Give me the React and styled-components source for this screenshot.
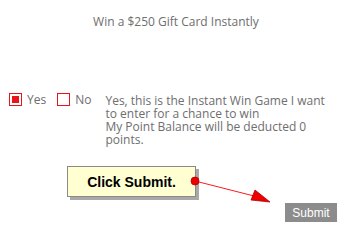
import React from 'react';
import styled, { createGlobalStyle } from 'styled-components';

const GlobalStyle = createGlobalStyle`
    html, body {
        margin: 0;
        padding: 0;
        background: #fff;
    }
    body {
        font-family: "Open Sans", "Liberation Sans", sans-serif;
    }
`;

const Page = styled.div`
    position: relative;
    width: 352px;
    height: 244px;
    overflow: hidden;
`;

const Title = styled.h1`
    margin: 0;
    padding-top: 14px;
    text-align: center;
    font-size: 12px;
    font-weight: 400;
    line-height: 16px;
    color: #6e6e6e;
`;

const OptionRow = styled.div`
    display: flex;
    align-items: flex-start;
    margin-top: 63px;
    padding-left: 9px;
`;

const Choice = styled.label`
    display: flex;
    align-items: center;
    gap: 5px;
    margin-right: ${(p) => p.$gap}px;
    font-size: 12px;
    line-height: 13px;
    color: #6e6e6e;
`;

const Box = styled.span`
    box-sizing: border-box;
    width: 13px;
    height: 13px;
    border: 1px solid #e8141a;
    background: #fff;
    display: flex;
    align-items: center;
    justify-content: center;

    &::after {
        content: '';
        display: ${(p) => (p.$checked ? 'block' : 'none')};
        width: 7px;
        height: 7px;
        background: #e8141a;
    }
`;

const Terms = styled.p`
    margin: 1px 0 0;
    font-size: 12px;
    line-height: 13px;
    color: #6e6e6e;
`;

const Footer = styled.div`
    display: flex;
    justify-content: flex-end;
    margin-top: 57px;
    padding-right: 15px;
`;

const SubmitButton = styled.button`
    border: none;
    background: #8c8c8c;
    color: #fff;
    font-family: "Liberation Sans", Arial, sans-serif;
    font-size: 12px;
    width: 52px;
    height: 19px;
    padding: 0;
`;

const Callout = styled.div`
    position: absolute;
    left: 67px;
    top: 166px;
    box-sizing: border-box;
    width: 129px;
    height: 31px;
    border: 1px solid #8a8a8a;
    background: #ffffd2;
    box-shadow: 3px 3px 0 #a9a9a9;
    display: flex;
    align-items: center;
    justify-content: center;
    font-family: "Liberation Sans", Arial, sans-serif;
    font-weight: 700;
    font-size: 14px;
    color: #000;
`;

const Pointer = styled.svg`
    position: absolute;
    left: 0;
    top: 0;
`;

export default function App() {
    return (
        <Page>
            <GlobalStyle />
            <Title>Win a $250 Gift Card Instantly</Title>
            <OptionRow>
                <Choice $gap={11}>
                    <Box $checked />
                    Yes
                </Choice>
                <Choice $gap={14}>
                    <Box />
                    No
                </Choice>
                <Terms>
                    Yes, this is the Instant Win Game I want
                    <br />
                    to enter for a chance to win
                    <br />
                    My Point Balance will be deducted 0
                    <br />
                    points.
                </Terms>
            </OptionRow>
            <Footer>
                <SubmitButton>Submit</SubmitButton>
            </Footer>
            <Callout>Click Submit.</Callout>
            <Pointer width="352" height="244">
                <line x1="195" y1="181" x2="258" y2="197" stroke="#ff1a1a" strokeWidth="1" />
                <polygon points="270,202 251,200 255,190" fill="#ee0000" stroke="#b00000" strokeWidth="0.8" />
                <circle cx="195" cy="181" r="4" fill="#ee0000" stroke="#b00000" strokeWidth="0.8" />
            </Pointer>
        </Page>
    );
}
